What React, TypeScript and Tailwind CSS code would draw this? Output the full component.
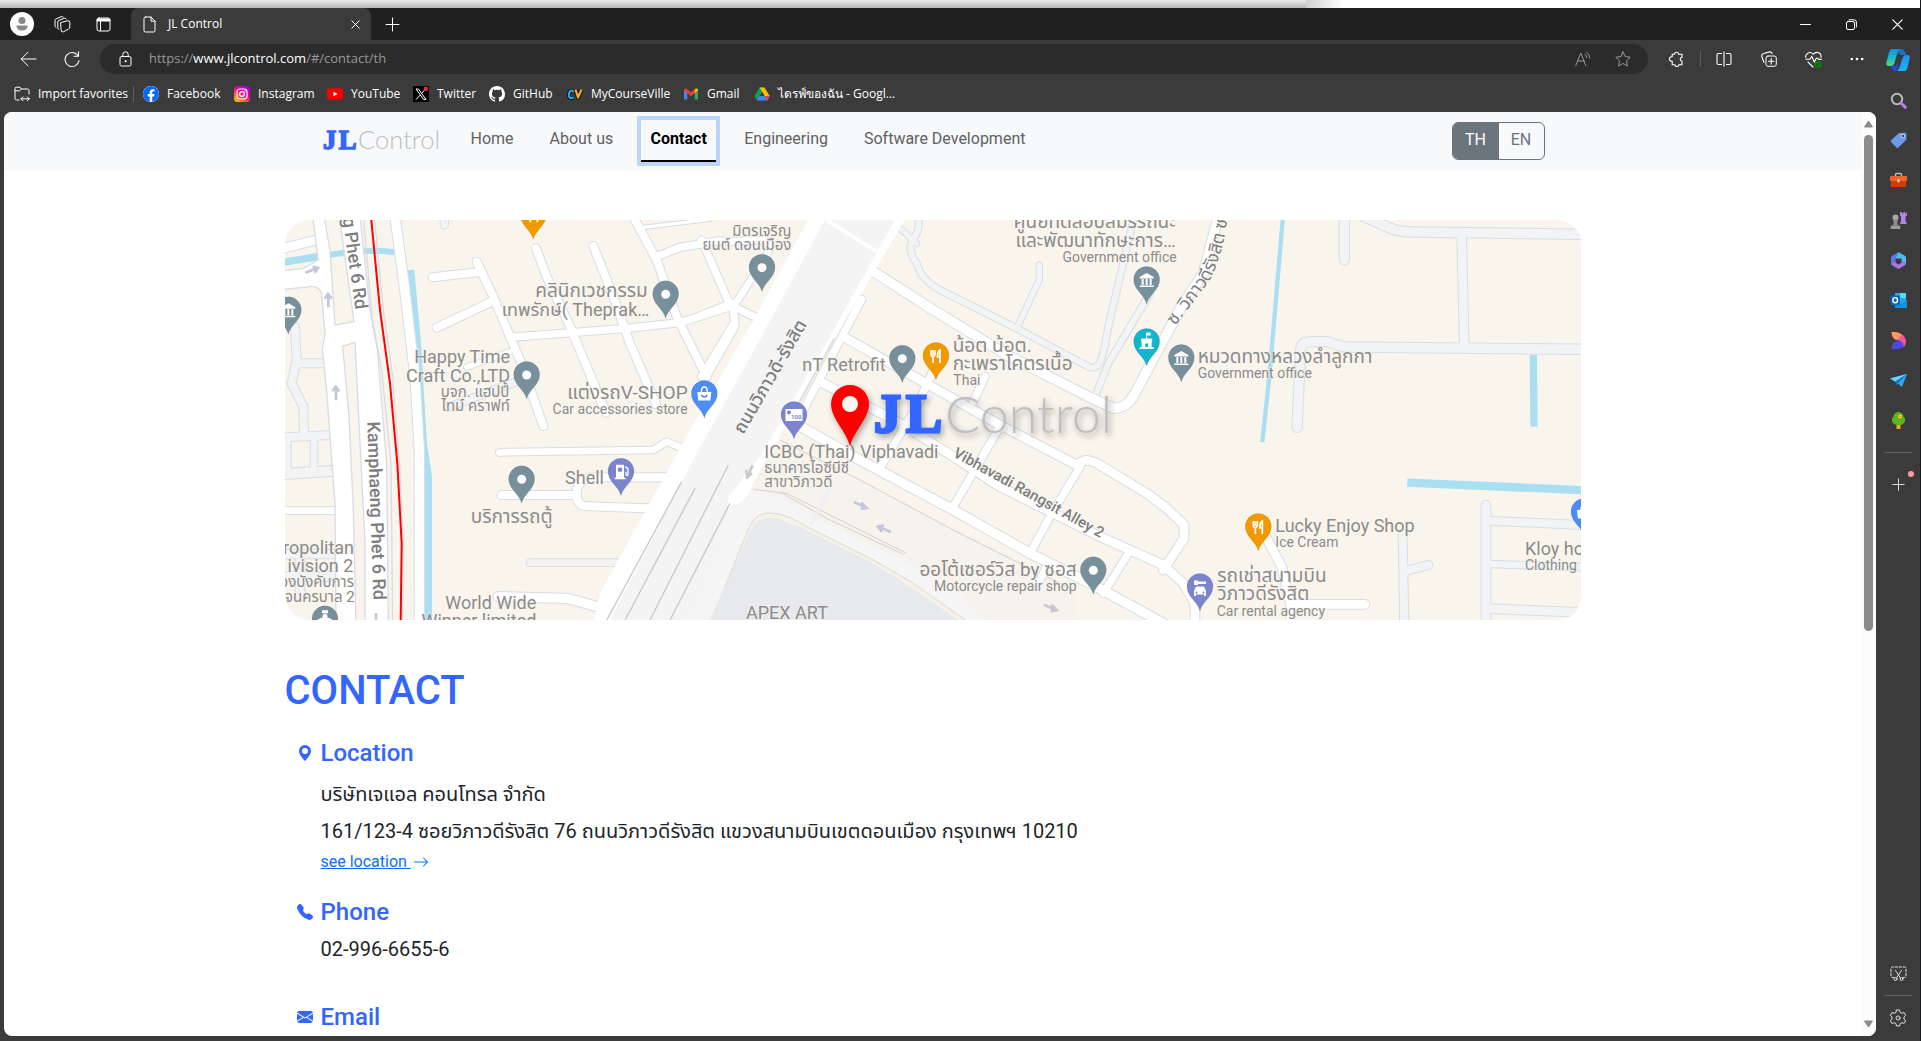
import React from "react";
import {
  BsArrowRight,
  BsEnvelopeFill,
  BsFacebook,
  BsGeoAltFill,
  BsGithub,
  BsTelephoneFill,
} from "react-icons/bs";

const UI = "font-['Open_Sans','Noto_Sans',sans-serif]";
const PAGE = "font-['Roboto','Noto_Sans_Thai',sans-serif]";

type SvgProps = { children: React.ReactNode; size?: string; box?: string };

function Line({ children, size = "size-4", box = "0 0 16 16" }: SvgProps) {
  return (
    <svg
      className={`${size} shrink-0`}
      viewBox={box}
      fill="none"
      stroke="currentColor"
      strokeLinecap="round"
      strokeLinejoin="round"
      aria-hidden="true"
    >
      {children}
    </svg>
  );
}

function IconButton({ label, className, children }: { label: string; className: string; children: React.ReactNode }) {
  return (
    <button type="button" aria-label={label} className={`flex shrink-0 items-center justify-center ${className}`}>
      {children}
    </button>
  );
}

/* ---------- Browser chrome ---------- */

function TabStrip() {
  return (
    <div className="flex h-8 shrink-0 items-stretch bg-[#202020] text-white">
      <IconButton label="Profile" className="w-[43px]">
        <svg className="size-6" viewBox="0 0 24 24" aria-hidden="true">
          <circle cx="12" cy="12" r="12" fill="#fff" />
          <circle cx="12" cy="8.500" r="3.500" fill="#8a8886" />
          <path d="M6.500 13.500h11c.4 3-2.300 5-5.500 5s-5.900-2-5.500-5z" fill="#8a8886" />
        </svg>
      </IconButton>
      <IconButton label="Workspaces" className="w-[38px]">
        <Line size="size-[17px]" box="0 0 17 17">
          <path d="M7 6.500 L13.500 4.800 Q15.800 4.300 15.800 6.300 V11 Q15.800 12.500 14.500 13 L9.500 15.800 Q7 16.500 7 14 Z" />
          <path d="M4.800 13.500 Q3.800 13 3.800 11.500 V6 Q3.800 4.800 5 4.300 L10.500 2.300 Q12 2 12.500 3" />
          <path d="M2 11.500 Q1 11 1 9.500 V4.500 Q1 3.300 2.200 2.800 L7 .8 Q8.500 .5 9.200 1" />
        </Line>
      </IconButton>
      <IconButton label="Tab actions" className="w-[45px]">
        <Line size="size-[15px]" box="0 0 15 15">
          <rect x="1" y="1" width="13" height="13" rx="2" />
          <path d="M4.500 4v9.500" />
          <path d="M2 3h11" strokeWidth="3" />
        </Line>
      </IconButton>
      <div className="ml-[5px] flex w-[240px] items-center rounded-t-lg bg-[#3b3b3b] pl-3">
        <Line size="h-[17px] w-[13px]" box="0 0 13 17">
          <path d="M2.500 1H8l4 4.200V14.500Q12 16 10.500 16h-8Q1 16 1 14.500v-12Q1 1 2.500 1zM8 1v4.200h4" />
        </Line>
        <span className="ml-3 flex-1 text-xs">JL Control</span>
        <IconButton label="Close tab" className="mr-1 size-6">
          <Line size="size-[9px]" box="0 0 9 9">
            <path d="M.8 .8l7.400 7.400M8.200 .8L.8 8.200" />
          </Line>
        </IconButton>
      </div>
      <IconButton label="New tab" className="w-[42px]">
        <Line size="size-[15px]" box="0 0 15 15">
          <path d="M7.500 1v13M1 7.500h13" />
        </Line>
      </IconButton>
      <div className="flex-1" />
      <IconButton label="Minimize" className="w-[46px]">
        <Line size="size-[11px]" box="0 0 11 11">
          <path d="M.5 5.500h10" />
        </Line>
      </IconButton>
      <IconButton label="Restore" className="w-[46px]">
        <Line size="size-[11px]" box="0 0 11 11">
          <rect x=".5" y="2.500" width="8" height="8" rx="1.500" />
          <path d="M3 .8h5Q10.400 .8 10.400 3V8" />
        </Line>
      </IconButton>
      <IconButton label="Close window" className="w-[46px]">
        <Line size="size-[11px]" box="0 0 11 11">
          <path d="M.8 .8l9.400 9.400M10.200 .8L.8 10.200" strokeWidth="1.200" />
        </Line>
      </IconButton>
    </div>
  );
}

function Toolbar() {
  return (
    <div className="flex h-9 shrink-0 items-start pt-1 text-white">
      <IconButton label="Back" className="ml-2 h-[30px] w-10">
        <Line size="h-4 w-[17px]" box="0 0 17 16">
          <path d="M16 8H1.200M8 1.200L1.200 8 8 14.800" />
        </Line>
      </IconButton>
      <IconButton label="Refresh" className="ml-1 h-[30px] w-10">
        <Line size="h-[17px] w-4" box="0 0 16 17">
          <path d="M13.800 4.500A7 7 0 1 0 15 9.500M14.500 .8v4.400H10" strokeWidth="1.100" />
        </Line>
      </IconButton>
      <div className="ml-2 flex h-[30px] flex-1 items-center rounded-full bg-[#2b2b2b] pl-[19px]">
        <Line size="h-4 w-[13px]" box="0 0 13 16">
          <rect x="1" y="5.500" width="11" height="9.500" rx="1.500" />
          <path d="M3.800 5.500V3.500a2.700 2.700 0 0 1 5.400 0v2" />
          <circle cx="6.500" cy="10.200" r=".6" fill="currentColor" />
        </Line>
        <p className="ml-[17px] flex-1 text-[13px] text-[#989898]" aria-label="Address">
          https://<span className="text-white">www.jlcontrol.com</span>/#/contact/th
        </p>
        <IconButton label="Read aloud" className="w-10 text-[#989898]">
          <Line size="size-4">
            <path d="M.8 14.500L5.800 2l5 12.500M2.500 10h6.600M10 3.200q1.600 1.300 1.600 3.300M12 1.500q2.600 2 2.800 5.500" />
          </Line>
        </IconButton>
        <IconButton label="Add to favorites" className="mr-[5px] w-10 text-[#989898]">
          <Line>
            <path d="M8 .8l2.200 4.700 5 .7-3.700 3.600.9 5.200L8 12.500 3.600 15l.9-5.200L.8 6.200l5-.7z" />
          </Line>
        </IconButton>
      </div>
      <div className="ml-3 flex h-[30px] items-center">
        <IconButton label="Extensions" className="w-[34px]">
          <Line>
            <path d="M5.500 3.300a2 2 0 1 1 4 0H13v3.200a1.700 1.700 0 0 0 0 3.500v3.700H9.800a1.800 1.800 0 1 1-3.800 0H3.200v-3.500a2.300 2.300 0 1 1 0-4.500V3.300z" strokeWidth="1.100" />
          </Line>
        </IconButton>
        <span className="ml-[6px] h-4 w-px bg-[#5c5c5c]" />
        <IconButton label="Split screen" className="ml-[5px] w-9">
          <Line>
            <path d="M8 .8v14.400M5.500 2.500H2.500Q1 2.500 1 4v8q0 1.500 1.500 1.500h3M10.500 2.500h3Q15 2.500 15 4v8q0 1.500-1.500 1.500h-3" strokeWidth="1.100" />
          </Line>
        </IconButton>
        <IconButton label="Collections" className="ml-[9px] w-9">
          <Line>
            <rect x="5" y="5" width="10.300" height="10.300" rx="2" />
            <path d="M10.200 7.500v5.500M7.500 10.200H13M3 11.500L.8 5.500Q.3 3.500 2 2.800L8.500 .9q1.800-.4 2.600 1.600" strokeWidth="1.100" />
          </Line>
        </IconButton>
        <IconButton label="Browser essentials" className="ml-2 w-9">
          <svg className="size-[17px]" viewBox="0 0 17 17" fill="none" stroke="#fff" strokeLinecap="round" strokeLinejoin="round" aria-hidden="true">
            <path d="M.8 6.500C0 3 4.500-.5 8.200 3.200 12-.5 16.800 2 16 6.500M.8 8.200h4l2-3 2.500 6 2-4h1.500l1 1.200h2.500M3 11l5 5" strokeWidth="1.100" />
            <circle cx="13" cy="13.300" r="3.600" fill="#107c10" stroke="none" />
            <path d="M11.500 13.500l1 1 2-2.200" stroke="#0a4a0a" />
          </svg>
        </IconButton>
        <IconButton label="Settings and more" className="mr-px ml-2 w-9">
          <svg className="h-1 w-[14px]" viewBox="0 0 14 4" fill="#fff" aria-hidden="true">
            <circle cx="1.800" cy="2" r="1.300" />
            <circle cx="7" cy="2" r="1.300" />
            <circle cx="12.200" cy="2" r="1.300" />
          </svg>
        </IconButton>
      </div>
    </div>
  );
}

const bookmarks = [
  {
    name: "Facebook",
    width: "w-[91px]",
    icon: <BsFacebook className="size-4 rounded-full bg-white text-[#0866ff]" />,
  },
  {
    name: "Instagram",
    width: "w-[93px]",
    icon: (
      <svg className="size-4" viewBox="0 0 16 16" fill="none" aria-hidden="true">
        <defs>
          <linearGradient id="insta" x1="0" y1="1" x2=".7" y2="0">
            <stop offset="0" stopColor="#ffd521" />
            <stop offset=".35" stopColor="#ff5f2a" />
            <stop offset=".65" stopColor="#f80094" />
            <stop offset="1" stopColor="#a100e0" />
          </linearGradient>
        </defs>
        <rect width="16" height="16" rx="3.500" fill="url(#insta)" />
        <rect x="3" y="3" width="10" height="10" rx="3" stroke="#fff" strokeWidth="1.200" />
        <circle cx="8" cy="8" r="2.400" stroke="#fff" strokeWidth="1.200" />
        <circle cx="11" cy="5" r=".7" fill="#fff" />
      </svg>
    ),
  },
  {
    name: "YouTube",
    width: "w-[86px]",
    icon: (
      <svg className="size-4" viewBox="0 0 16 16" aria-hidden="true">
        <rect y="2.300" width="16" height="11.500" rx="3" fill="#f00" />
        <path d="M6.500 5.700v4.600L10.500 8z" fill="#fff" />
      </svg>
    ),
  },
  {
    name: "Twitter",
    width: "w-[76px]",
    icon: (
      <svg className="size-4" viewBox="0 0 16 16" fill="none" aria-hidden="true">
        <path d="M0 0h16v16H0z" fill="#000" />
        <path d="M3 3h2.400l7.600 10.500h-2.400zM3 13.500L7.300 9M8.800 7.200L12.500 3" stroke="#fff" />
        <circle cx="13" cy="2.800" r="2.300" fill="#f4212e" />
      </svg>
    ),
  },
  { name: "GitHub", width: "w-[78px]", icon: <BsGithub className="size-4 text-white" /> },
  {
    name: "MyCourseVille",
    width: "w-[116px]",
    icon: (
      <svg className="size-4" viewBox="0 0 16 16" fill="none" strokeLinejoin="round" aria-hidden="true">
        <path d="M7.200 5.500Q2.500 3 2 8.200T6.500 11.500" stroke="#111" strokeWidth="4" />
        <path d="M7.200 5.500Q2.500 3 2 8.200T6.500 11.500" stroke="#29a8e8" strokeWidth="2.200" />
        <path d="M8.500 3.500l2.500 8 3.500-8" stroke="#111" strokeWidth="4" />
        <path d="M8.500 3.500l2.500 8 3.500-8" stroke="#f9a825" strokeWidth="2.200" />
      </svg>
    ),
  },
  {
    name: "Gmail",
    width: "w-[71px]",
    icon: (
      <svg className="size-4" viewBox="0 0 16 16" aria-hidden="true">
        <path d="M1 3.500v10h3.300V6z" fill="#4285f4" />
        <path d="M15 3.500v10h-3.300V6z" fill="#34a853" />
        <path d="M1 4.500Q1 2 3.200 2.600L8 6.300l4.800-3.700Q15 2 15 4.500L8 10.300z" fill="#ea4335" />
        <path d="M11.700 7.300V3.500l1.100-.9Q15 2 15 4.500z" fill="#fbbc04" />
      </svg>
    ),
  },
  {
    name: "ไดรฟ์ของฉัน - Googl…",
    width: "w-[150px]",
    icon: (
      <svg className="size-4" viewBox="0 0 16 16" aria-hidden="true">
        <path d="M5.500 1.500h5L8 6 3 14.500.5 10z" fill="#0f9d58" />
        <path d="M10.500 1.500L15.700 10h-5L5.500 1.500z" fill="#fbbc04" />
        <path d="M3 14.500L5.300 10h10.400l-2.500 4.500z" fill="#4285f4" />
        <path d="M10.700 10h5l-2.500 4.500z" fill="#ea4335" />
      </svg>
    ),
  },
];

function Favorites() {
  return (
    <nav aria-label="Favorites" className="flex h-9 shrink-0 items-center text-xs whitespace-nowrap text-white">
      <a href="#import" className="ml-[14px] flex items-center gap-2">
        <Line size="size-4">
          <path d="M15 8V4.500Q15 3 13.500 3H7.500L6 1.200H2.200Q1 1.200 1 2.700v10Q1 14 2.500 14H5M1 4.800h4.500L7.500 3M7 12.800h8.300M9 10.800l-2 2 2 2M13.300 10.800l2 2-2 2" />
        </Line>
        <span className="w-[86px]">Import favorites</span>
      </a>
      <span className="mr-[9px] ml-[9px] h-4 w-px bg-[#606060]" />
      {bookmarks.map((b) => (
        <a key={b.name} href={`#${b.name}`} className={`flex shrink-0 items-center gap-2 ${b.width}`}>
          <span className="shrink-0">{b.icon}</span>
          <span>{b.name}</span>
        </a>
      ))}
    </nav>
  );
}

const sideApps: { label: string; art: React.ReactNode }[] = [
  {
    label: "Search",
    art: (
      <>
        <circle cx="7" cy="7" r="5.200" fill="none" stroke="#b8b8b8" strokeWidth="2" />
        <path d="M11.500 11.500l3.800 3.800" stroke="#b780f0" strokeWidth="3" strokeLinecap="round" />
      </>
    ),
  },
  {
    label: "Shopping",
    art: (
      <>
        <path d="M9 1l6-.3q1.300 0 1.300 1.300l.2 5.500-8 8q-1 1-2 0L1.200 10.300q-1-1 0-2z" fill="#6f9ae8" />
        <circle cx="13" cy="4" r="1.800" fill="#3a4a6a" stroke="#dce8ff" strokeWidth=".8" />
      </>
    ),
  },
  {
    label: "Tools",
    art: (
      <>
        <path d="M5.500 4V2.500Q5.500 1.500 6.500 1.500h4q1 0 1 1V4" fill="none" stroke="#bbb" strokeWidth="1.400" />
        <rect y="4" width="17" height="5" rx="1" fill="#f2652a" />
        <path d="M.8 9h15.400v5q0 1-1 1H1.800q-1 0-1-1z" fill="#d83b01" />
        <rect x="7.300" y="7" width="2.400" height="3.500" rx="1" fill="#ccc" />
      </>
    ),
  },
  {
    label: "Games",
    art: (
      <>
        <path d="M10 0h1.800v1.500h1.400V0H15v1.500h1.500V0H17v3.500l-1.500 1V9l1.500 3H10l1-3V4.500L10 3.500z" fill="#b583ea" />
        <circle cx="5.500" cy="5.500" r="3" fill="#a8a8a8" />
        <path d="M3 8.500h5v1.500H7l1 3.500H3L4 10H3z" fill="#8f8f8f" />
        <path d="M.8 13.500h9.400V17H.8z" fill="#9c9c9c" />
      </>
    ),
  },
  {
    label: "Microsoft 365",
    art: (
      <>
        <path d="M8.500 .3L2.500 3.500Q1 4.300 1 6v5.500l4.500-2.700V6.500L11.500 2.500z" fill="#5f74ee" />
        <path d="M8.500 .3l6 3.200Q16 4.300 16 6v5.200L11.500 8.500V6.500L5.500 6.500z" fill="#4fbdf4" />
        <path d="M1 11.500L5.500 8.800v2L8.500 12.500l3-1.700V8.500L16 11.200q0 1.500-1.500 2.300l-5 3q-1 .5-2 0l-5-3Q1 12.700 1 11.500z" fill="#a678e2" />
      </>
    ),
  },
  {
    label: "Outlook",
    art: (
      <>
        <path d="M5 1h11v15H5z" fill="#28a8ea" />
        <path d="M10 1h6v5h-6z" fill="#50d9ff" />
        <path d="M5 9l6 3 6-4v8H5z" fill="#1490df" />
        <rect x=".5" y="3.500" width="9.500" height="9.500" rx="1" fill="#0a64b8" />
        <ellipse cx="5.200" cy="8.200" rx="2.300" ry="2.600" fill="none" stroke="#fff" strokeWidth="1.400" />
      </>
    ),
  },
  {
    label: "Designer",
    art: (
      <>
        <path d="M1.500 0C9-.5 16 3 16 9.500q0 4-2.500 6Q13 9 7 8 2 7 1.500 0z" fill="#f0559a" />
        <path d="M1.500 0C6-.3 10 1 12 3L7.500 8Q2 7 1.500 0z" fill="#ff9a5c" />
        <path d="M1.500 17q0-8 7.500-8.500 4.500 1.500 4.500 6.500-4 3-12 2z" fill="#4a4ae8" />
      </>
    ),
  },
  {
    label: "Drop",
    art: (
      <>
        <path d="M0 6.500L17 2l-5 13-4.500-3.500z" fill="#2fa6ee" />
        <path d="M0 6.500L17 2 5.500 9.500z" fill="#6cd0ff" />
        <path d="M5.500 9.500L17 2 7.500 11.500 6.500 14z" fill="#1374b8" />
      </>
    ),
  },
  {
    label: "Tree",
    art: (
      <>
        <path d="M6.500 12h4v5h-4z" fill="#f5a623" />
        <path d="M8.500 0Q13 .5 13.500 4.500 16 7 14.500 10.500 12.500 13.500 8.500 13 4.500 13.500 2.500 10.500 1 7 3.500 4.500 4 .5 8.500 0z" fill="#5cb518" />
        <circle cx="10" cy="4.500" r="2" fill="#ffc83d" />
        <circle cx="10" cy="4.500" r=".8" fill="#e8791a" />
      </>
    ),
  },
];

function Sidebar() {
  return (
    <aside className="flex w-11 shrink-0 flex-col items-center pt-2 text-[#dedede]">
      <IconButton label="Copilot" className="h-6 w-7">
        <svg className="h-[23px] w-6" viewBox="0 0 24 23" aria-hidden="true">
          <defs>
            <linearGradient id="copA" x1="0" y1="0" x2="0" y2="1">
              <stop offset="0" stopColor="#1b8fd8" />
              <stop offset=".5" stopColor="#16b8d0" />
              <stop offset="1" stopColor="#5ad67a" />
            </linearGradient>
            <linearGradient id="copB" x1="0" y1="0" x2="0" y2="1">
              <stop offset="0" stopColor="#2390f0" />
              <stop offset="1" stopColor="#18b4f8" />
            </linearGradient>
          </defs>
          <path d="M7 0h8q3 0 4 3l1 3h-5l-3-2z" fill="#1c6cc8" />
          <path d="M5 0h9q-2 1-3 5L8.500 14q-1 3-4 3H3q-3.500 0-2.500-4L3 3.500Q4 0 5 0z" fill="url(#copA)" />
          <path d="M19 22h-8q2-1 3-5l2.500-8q1-3 4-3h.5q3.500 0 2.500 4l-2 8.500Q20.500 22 19 22z" fill="url(#copB)" />
          <path d="M5 17h5l3-6-1.500 8Q10.500 22 9 22q-2.500 0-3-2.500z" fill="#1d4fd8" />
        </svg>
      </IconButton>
      <ul className="mt-2 flex flex-col">
        {sideApps.map((a) => (
          <li key={a.label}>
            <IconButton label={a.label} className="h-10 w-11">
              <svg className="size-[17px]" viewBox="0 0 17 17" aria-hidden="true">
                {a.art}
              </svg>
            </IconButton>
          </li>
        ))}
      </ul>
      <span className="mt-3 h-px w-7 bg-[#636363]" />
      <IconButton label="Customize" className="relative mt-[11px] h-10 w-11">
        <Line size="size-[13px]" box="0 0 13 13">
          <path d="M6.500 .8v11.400M.8 6.500h11.400" />
        </Line>
        <span className="absolute top-[7px] right-[6px] size-[6px] rounded-full bg-[#f4a09a]" />
      </IconButton>
      <div className="flex-1" />
      <IconButton label="Screenshot" className="h-10 w-11">
        <Line size="size-[17px]" box="0 0 17 17">
          <path d="M4 12.500H2.500Q1 12.500 1 11V3.500Q1 2 2.500 2h12Q16 2 16 3.500V11q0 1.500-1.500 1.500H13" strokeDasharray="2.500 1.500" />
          <path d="M5.500 5.500l5 7.500M11.500 5.500l-5 7.500" />
          <circle cx="5.500" cy="14" r="1.500" />
          <circle cx="11.500" cy="14" r="1.500" />
        </Line>
      </IconButton>
      <span className="my-[2px] h-px w-7 shrink-0 bg-[#636363]" />
      <IconButton label="Settings" className="mb-[3px] h-10 w-11">
        <Line size="size-[18px]" box="0 0 18 18">
          <path d="M7.500 1h3l.6 2.300 1.700 1 2.300-.7 1.500 2.600L15 8v2l1.600 1.800-1.500 2.600-2.300-.7-1.700 1-.6 2.300h-3l-.6-2.300-1.700-1-2.300.7-1.500-2.600L3 10V8L1.400 6.200l1.500-2.600 2.300.7 1.700-1z" />
          <circle cx="9" cy="9" r="2" />
        </Line>
      </IconButton>
    </aside>
  );
}

/* ---------- Web page ---------- */

function Wordmark() {
  return (
    <>
      <g fill="#3366ff" stroke="#3366ff" strokeWidth="3" fontSize="54" fontWeight="700" fontFamily="Liberation Serif, serif">
        <text x="4" y="40">J</text>
        <text x="36" y="40">L</text>
      </g>
      <text x="75" y="41" fill="#bfbfbf" fontSize="52" fontWeight="300" fontFamily="Lato, sans-serif">
        Control
      </text>
    </>
  );
}

const links = ["Home", "About us", "Contact", "Engineering", "Software Development"];

function SiteNav() {
  return (
    <header className="h-[58px] shrink-0 bg-[#f8f9fb]">
      <div className="mx-auto flex max-w-[1320px] items-start px-12">
        <a href="#home" className="mt-[17px] block">
          <svg className="h-6 w-[121px]" viewBox="0 0 246 48" role="img" aria-label="JL Control">
            <Wordmark />
          </svg>
        </a>
        <nav className="ml-[11px] flex pt-2" aria-label="Main">
          {links.map((l) =>
            l === "Contact" ? (
              <a
                key={l}
                href="#contact"
                aria-current="page"
                className="mx-[10px] h-[42px] w-[75px] border-b-2 border-black pt-[7px] text-center leading-6 font-bold text-black outline-4 outline-[#bcd6fb]"
              >
                {l}
              </a>
            ) : (
              <a key={l} href="#page" className="mx-[10px] px-2 pt-[7px] leading-6 text-[#5f6163]">
                {l}
              </a>
            ),
          )}
        </nav>
        <div className="mt-[10px] ml-auto flex h-[38px] overflow-hidden rounded-md border border-[#6c757d]" role="group" aria-label="Language">
          <button type="button" className="w-[46px] bg-[#6c757d] pb-[2px] text-white">TH</button>
          <button type="button" className="w-[45px] pb-[2px] text-[#6c757d]">EN</button>
        </div>
      </div>
    </header>
  );
}

/* Map geometry is kept in thirds of a pixel. */

const Z6 = 1260;
const Z7 = 2550;
const WHITE = "#ffffff";
const GREY = "#f1f3f4";

type Road = [number, string, number, string];

const minorRoads: Road[] = [
  [0, "M45 350L50 450L35 520L70 590L72 670", 24, GREY],
  [0, "M55 460H135", 24, GREY],
  [0, "M10 682L155 675", 24, GREY],
  [0, "M10 792L160 782", 30, GREY],
  [0, "M22 690V790M102 680V780", 20, GREY],
  [0, "M10 1032H165M10 1100H165M60 1030V1160", 26, GREY],
  [0, "M10 902H165", 20, WHITE],
  [0, "M10 115L108 90", 26, WHITE],
  [0, "M505 592L735 505", 22, GREY],
  [0, "M750 1058H1040", 20, GREY],
  [0, "M493 20V45", 22, GREY],
  [Z6, "M655 30C665 90 600 90 650 160C665 220 720 240 780 270L950 355L1165 470C1200 485 1210 440 1225 350L1300 30", 18, GREY],
  [Z6, "M1018 165V210L950 355", 16, GREY],
  [Z6, "M590 45L650 100", 16, GREY],
  [Z6, "M1350 250L1225 460L1185 560", 18, GREY],
  [Z7, "M643 20V150", 28, GREY],
  [Z7, "M700 20C780 50 780 65 850 66L1370 73", 28, GREY],
  [Z7, "M995 75L1003 415", 26, GREY],
  [Z7, "M501 652L512 420C515 395 530 395 550 395H590C620 400 620 410 650 411L1370 418", 28, GREY],
  [Z7, "M1068 885V1240", 26, GREY],
  [Z7, "M1075 932L1370 946", 24, GREY],
  [Z7, "M1075 1062L1370 1072", 20, GREY],
  [Z7, "M1075 1196L1370 1208", 26, GREY],
  [Z7, "M818 970L823 1240", 24, GREY],
  [Z7, "M830 1082L895 1065", 24, GREY],
];

const mainRoads: Road[] = [
  [0, "M345 20L372 220L405 500L418 720V1240", 28, WHITE],
  [0, "M768 115L800 200L870 350L978 608", 24, WHITE],
  [0, "M940 108L1000 260L1050 400L1128 582", 24, WHITE],
  [0, "M590 155L640 260L690 380L720 450L790 648", 24, WHITE],
  [0, "M458 202L605 185", 24, WHITE],
  [0, "M470 353L635 275", 24, WHITE],
  [0, "M690 382L1040 355L1200 338L1350 290", 22, WHITE],
  [0, "M1060 20L1130 150L1190 320L1280 500", 24, WHITE],
  [0, "M1130 140L1200 112L1320 92", 22, WHITE],
  [0, "M1090 52L1290 28", 10, WHITE],
  [0, "M1280 500L1365 350", 20, WHITE],
  [0, "M560 472L690 425", 16, WHITE],
  [0, "M658 727L1120 720L1160 695L1225 722", 20, WHITE],
  [0, "M665 855H890C890 900 930 885 960 890L1150 896", 24, WHITE],
  [0, "M890 855C890 800 930 802 960 802H1200", 24, WHITE],
  [0, "M655 1160L860 1165L990 1200", 28, WHITE],
  [Z6, "M60 95L190 90C225 100 200 140 185 160L100 290", 20, WHITE],
  [Z6, "M5 90L90 285L195 335M0 318L95 280L105 335L5 500", 22, WHITE],
  [Z6, "M505 175L700 300L930 440L1170 562L1240 595C1290 595 1300 560 1350 465L1400 372L1450 280L1510 190L1555 20", 28, WHITE],
  [Z6, "M430 380L660 510L900 645L1130 765C1160 740 1180 755 1200 765L1340 850L1400 895L1452 945V985L1390 1080", 26, WHITE],
  [Z6, "M360 515L610 645L760 740L900 830L1200 980L1390 1065L1450 1120L1485 1180V1240", 26, WHITE],
  [Z6, "M285 640L480 750L760 900L990 1030L1180 1125L1390 1240", 28, WHITE],
  [Z6, "M700 480L650 590L545 765M855 500L820 575M900 650L760 890M1140 770L1050 920L990 1030M1285 1030L1210 1150M1045 1060L1020 1110", 22, WHITE],
  [Z6, "M485 268L310 600", 22, WHITE],
  [Z7, "M405 975L455 1070L482 1183H705M482 1183V1240", 26, WHITE],
];

function Roads({ list }: { list: Road[] }) {
  return (
    <g fill="none" strokeLinecap="round" strokeLinejoin="round">
      {list.map(([dx, d, w], i) => (
        <path key={`c${i}`} d={d} transform={`translate(${dx} 0)`} stroke="#d9dce3" strokeWidth={w + 6} />
      ))}
      {list.map(([dx, d, w, c], i) => (
        <path key={`f${i}`} d={d} transform={`translate(${dx} 0)`} stroke={c} strokeWidth={w} />
      ))}
    </g>
  );
}

const glyphs: Record<string, React.ReactNode> = {
  dot: <circle cx="0" cy="-24" r="4.500" fill="#fff" />,
  food: (
    <path d="M-5-30v4q0 2.500 2 3v6M-3-30v5M-1-30v4q0 2-2 3M4-17v-13q-2.500 1-2.500 7H4" fill="none" stroke="#fff" strokeWidth="1.700" />
  ),
  gov: <path d="M-7-27L0-31l7 4v1.500H-7zM-5-25h2v6h-2zM-1-25h2v6h-2zM3-25h2v6H3zM-7-18.500H7v1.500H-7z" fill="#fff" />,
  fort: (
    <path
      d="M-.5-33.500H4v3H.5V-27.500H5.500V-24H5V-19H7V-17H-7V-19H-5V-24H-5.500V-27.500H-.5ZM-1.500-19H1.500V-22.500H-1.500Z"
      fill="#fff"
      fillRule="evenodd"
    />
  ),
  bag: (
    <>
      <path d="M-7-26H7l-1 8.500H-6z" fill="#fff" />
      <path d="M-3-26q0-5 3-5t3 5" fill="none" stroke="#fff" strokeWidth="1.500" />
      <path d="M-3-23q3 4 6 0" fill="none" stroke="#4285f4" strokeWidth="1.500" />
    </>
  ),
  fuel: (
    <>
      <path d="M-5-31h8v13h1.500v1.500h-11V-18H-5z" fill="#fff" />
      <path d="M-3-28h4v4h-4z" fill="#7b84cf" />
      <path d="M4-29l3 2v6q-1 2-2 0v-3" fill="none" stroke="#fff" strokeWidth="1.300" />
    </>
  ),
  cash: (
    <>
      <rect x="-8.500" y="-30" width="17" height="12" fill="#fff" />
      <circle cx="-5" cy="-26.500" r="2" fill="#7b84cf" />
      <text x="-3" y="-20" fontSize="6" fontWeight="700" fill="#7b84cf" fontFamily="Roboto, sans-serif">100</text>
    </>
  ),
  car: (
    <>
      <path d="M-6-20l2-4.500h8L6-20v5H4v-1.500h-8V-15h-2z" fill="#fff" />
      <path d="M-6-30.500h4v1h8v2.500h-8v1h-4z" fill="#fff" />
      <circle cx="-3.500" cy="-18.500" r="1" fill="#7b84cf" />
      <circle cx="3.500" cy="-18.500" r="1" fill="#7b84cf" />
    </>
  ),
  badge: (
    <>
      <path d="M-3-33h6v3h-6zM-7-24q7-4 14 0v4H-7z" fill="#fff" />
      <circle cx="0" cy="-27" r="2.500" fill="#fff" />
    </>
  ),
};

const SLATE = "#78909c";
const pins: [number, number, string, string][] = [
  [760, 88, "#f29900", "food"],
  [1157, 325, SLATE, "dot"],
  [740, 567, SLATE, "dot"],
  [1273, 624, "#4c8df6", "bag"],
  [1023, 857, "#7b84cf", "fuel"],
  [725, 880, SLATE, "dot"],
  [25, 373, SLATE, "gov"],
  [135, 1300, SLATE, "badge"],
  [Z6 + 186, 245, SLATE, "dot"],
  [Z6 + 607, 518, SLATE, "dot"],
  [Z6 + 708, 510, "#f29900", "food"],
  [Z6 + 282, 687, "#7b84cf", "cash"],
  [Z6 + 1180, 1153, SLATE, "dot"],
  [Z7 + 50, 282, SLATE, "gov"],
  [Z7 + 50, 468, "#12b5cb", "fort"],
  [Z7 + 154, 516, SLATE, "gov"],
  [Z7 + 385, 1023, "#f29900", "food"],
  [Z7 + 210, 1203, "#7b84cf", "car"],
  [Z7 + 1362, 978, "#4c8df6", "bag"],
];

type Label = [number, number, string, "start" | "end", number];
const labels: Label[] = [
  [1103, 262, "คลินิกเวชกรรม", "end", 19],
  [1108, 318, "เทพรักษ์( Theprak…", "end", 18],
  [690, 460, "Happy Time", "end", 18],
  [690, 515, "Craft Co.,LTD", "end", 18],
  [688, 560, "บจก. แฮปปี้", "end", 15],
  [690, 602, "ไทม์ คราฟท์", "end", 15],
  [1223, 567, "แต่งรถV-SHOP", "end", 19],
  [1223, 612, "Car accessories store", "end", 14],
  [972, 822, "Shell", "end", 18],
  [572, 938, "บริการรถตู้", "start", 19],
  [222, 1032, "ropolitan", "end", 18],
  [220, 1087, "ivision 2", "end", 18],
  [222, 1130, "องบังคับการ", "end", 15],
  [224, 1175, "จนครบาล 2", "end", 15],
  [769, 1197, "World Wide", "end", 18],
  [769, 1250, "Winner limited", "end", 18],
  [Z6 + 274, 78, "มิตรเจริญ", "end", 15],
  [Z6 + 274, 120, "ยนต์ ดอนเมือง", "end", 15],
  [Z6 + 307, 483, "nT Retrofit", "start", 18],
  [Z6 + 758, 427, "น้อต น้อต.", "start", 19],
  [Z6 + 758, 480, "กะเพราโคตรเนื้อ", "start", 19],
  [Z6 + 760, 525, "Thai", "start", 14],
  [Z6 + 193, 743, "ICBC (Thai) Viphavadi", "start", 18],
  [Z6 + 193, 788, "ธนาคารไอซีบีซี", "start", 15],
  [Z6 + 193, 831, "สาขาวิภาวดี", "start", 15],
  [Z6 + 1130, 1097, "ออโต้เซอร์วิส by ซอส", "end", 19],
  [Z6 + 1130, 1143, "Motorcycle repair shop", "end", 14],
  [Z6 + 138, 1228, "APEX ART", "start", 18],
  [Z7 + 137, 55, "ศูนย์ทดสอบสมรรถนะ", "end", 19],
  [Z7 + 137, 110, "และพัฒนาทักษะการ…", "end", 19],
  [Z7 + 140, 157, "Government office", "end", 14],
  [Z7 + 203, 458, "หมวดทางหลวงลำลูกกา", "start", 19],
  [Z7 + 203, 503, "Government office", "start", 14],
  [Z7 + 436, 967, "Lucky Enjoy Shop", "start", 18],
  [Z7 + 436, 1011, "Ice Cream", "start", 14],
  [Z7 + 262, 1117, "รถเช่าสนามบิน", "start", 19],
  [Z7 + 262, 1171, "วิภาวดีรังสิต", "start", 19],
  [Z7 + 260, 1219, "Car rental agency", "start", 14],
  [Z7 + 1185, 1035, "Kloy ho", "start", 18],
  [Z7 + 1185, 1080, "Clothing", "start", 14],
];

const roadNames: [number, number, number, string, number][] = [
  [188, 25, 82, "g Phet 6 Rd", 18],
  [262, 635, 88, "Kamphaeng Phet 6 Rd", 18],
  [Z6 + 757, 738, 29, "Vibhavadi Rangsit Alley 2", 15],
  [Z6 + 130, 675, -60, "ถนนวิภาวดี-รังสิต", 18],
];

const px = (u: number) => (u - 15) / 3;
const py = (v: number) => (v - 30) / 3;

function StreetMap() {
  return (
    <svg
      className="block h-[400px] w-full rounded-[24px]"
      viewBox="0 0 1296 400"
      preserveAspectRatio="xMidYMid slice"
      role="img"
      aria-label="Map of the JL Control office"
      fontFamily="Roboto, 'Noto Sans Thai', sans-serif"
    >
      <rect width="1296" height="400" fill="#f9f5ed" />
      <g transform="translate(-5 -10) scale(0.33333)">
        <g fill="none" stroke="#aadff2">
          <path d="M10 157L112 140" strokeWidth="22" />
          <path d="M150 134L230 124L300 122L345 127" strokeWidth="18" />
          <path d="M392 180L412 400L430 700L445 800V1240" strokeWidth="22" />
          <g transform="translate(2550 0)">
            <path d="M458 30L420 480L397 697" strokeWidth="13" />
            <path d="M1210 435L1212 650" strokeWidth="22" />
            <path d="M832 818L1370 841" strokeWidth="25" />
          </g>
        </g>
        <Roads list={minorRoads} />

        {/* western arterials */}
        <g stroke="#d9dce3" strokeWidth="4">
          <path d="M-10 185L70 175L115 150L98 20H132L150 120L165 345L222 335L178 20H240L270 300L292 420L320 760L325 1240H255V1000L225 398L188 408L207 620L220 900L228 1240H168L165 880L150 680L140 540L127 420L135 370L125 250Q115 228 95 230L-10 240Z" fill="#fff" />
          <path d="M250 20L277 330L305 480L333 760L338 1240M283 20L310 300L338 500L358 760L370 1000L368 1240" fill="none" />
        </g>
        <path d="M273 20L300 300L330 520L352 760L365 1000L362 1240" fill="none" stroke="#ff0000" strokeWidth="6" />

        {/* airport side */}
        <path d="M1380 860C1420 820 1480 840 1560 880L1880 1035L2030 1120L2075 1160L2110 1240H1150Z" fill="#f5f5f5" />
        <path d="M1500 690L1740 810L2020 960L2380 1140L2400 1240H2110L2030 1130L1640 940L1480 850L1410 840Z" fill="#f6f2ec" />
        <path d="M1290 1240L1400 970C1420 920 1440 905 1480 910C1530 915 1560 940 1600 960L1780 1050L1900 1120L2070 1240Z" fill="#f6f2ea" stroke="#dcd8cd" strokeWidth="3" />
        <path d="M1285 1240L1405 975C1430 925 1450 920 1490 926L1560 952L1760 1050L1860 1110L2050 1240Z" fill="#e8e9ed" />
        <path d="M1500 690L1740 810L2020 960L2370 1135M1420 838L1520 850L1660 920L1880 1030M1500 846L1640 925L1870 1033" fill="none" stroke="#d5d0c4" strokeWidth="3" />
        <path d="M1590 945L1650 830" fill="none" stroke="#eff0f1" strokeWidth="12" />

        <Roads list={mainRoads} />

        {/* highway */}
        <path d="M1590 20L1425 320L1230 660L960 1150L940 1240H1180L1355 885Q1400 880 1420 820L1670 375L1880 20Z" fill="#fff" />
        <path d="M1640 20L1450 370L1245 740L985 1240H1230L1340 960L1345 860L1440 740L1655 370L1850 20Z" fill="#f4f4f4" />
        <path d="M1345 765L1105 1240M1245 835L1030 1240M1205 815L975 1240M1350 880L1165 1240" fill="none" stroke="#c9c9c9" strokeWidth="4" />
        <path d="M1663 385L1545 600" stroke="#dcdcdc" strokeWidth="5" />
        <path d="M1640 30L1790 125" stroke="#fff" strokeWidth="12" />

        {/* direction arrows */}
        <g fill="none" stroke="#c3c6dc" strokeWidth="8">
          <path d="M145 292V256M134 266L144 252L155 266M168 570V534M157 544L167 530L178 544M288 1235V1210" />
          <path d="M76 188L112 174M98 170L114 174L104 188" />
          <path d="M1722 876L1756 892M1744 878L1760 894L1742 896M1832 966L1796 950M1812 946L1794 950L1806 966" />
          <path d="M2292 1184L2328 1200M2314 1184L2330 1200L2312 1204M1418 766L1402 800M1398 780L1402 802L1416 790" stroke="#c8c9cd" />
        </g>

        {pins.map(([x, y, color, g], i) => (
          <g key={i} transform={`translate(${x} ${y}) scale(3)`}>
            <path d="M0 0C-2-9-13-14-13-24.500a13 13 0 1 1 26 0C13-14 2-9 0 0z" fill={color} stroke="#00000022" strokeWidth=".6" />
            {glyphs[g]}
          </g>
        ))}
      </g>

      <g fill="#8b8b8b" stroke="#f9f5ed" strokeWidth="2" paintOrder="stroke" strokeLinejoin="round" strokeOpacity=".5">
        {labels.map(([x, y, t, anchor, size]) => (
          <text key={`${t}${x}`} x={px(x)} y={py(y)} textAnchor={anchor} fontSize={size}>
            {t}
          </text>
        ))}
      </g>
      <g fill="#7d7d7d" fontWeight="500">
        {roadNames.map(([x, y, a, t, size]) => (
          <text key={t} fontSize={size} transform={`translate(${px(x)} ${py(y)}) rotate(${a})`}>
            {t}
          </text>
        ))}
        <path id="soi" d="M890 106L925 60Q940 30 943 -10" fill="none" />
        <text fontSize="18" fontWeight="400">
          <textPath href="#soi">ซ. วิภาวดีรังสิต ซ</textPath>
        </text>
      </g>

      <g className="drop-shadow-[2px_3px_3px_rgba(0,0,0,0.35)]">
        <path d="M565 226C561 211 546 198 546 184a19 19 0 1 1 38 0C584 198 569 211 565 226z" fill="#ff0000" />
        <circle cx="565" cy="184" r="8" fill="#faf6f0" />
        <g transform="translate(585 172)" paintOrder="stroke">
          <Wordmark />
        </g>
      </g>
    </svg>
  );
}

function Entry({ icon, title, children }: { icon: React.ReactNode; title: string; children?: React.ReactNode }) {
  return (
    <section className="pl-3">
      <h2 className="flex items-center gap-2 text-2xl leading-[30px] font-medium text-[#3366ff]">
        <span className="text-base">{icon}</span>
        {title}
      </h2>
      <div className="pl-6 text-xl leading-[30px] text-[#212529]">{children}</div>
    </section>
  );
}

function ContactPage() {
  return (
    <main className="mx-auto w-full max-w-[1320px] px-3 pt-[50px]">
      <StreetMap />
      <h1 className="mt-[47px] text-[40px] leading-12 font-medium text-[#3366ff]">CONTACT</h1>
      <div className="mt-[23px] flex flex-col">
        <Entry icon={<BsGeoAltFill />} title="Location">
          <p className="mt-[11px]">บริษัทเจแอล คอนโทรล จำกัด</p>
          <p className="mt-[7px]">161/123-4 ซอยวิภาวดีรังสิต 76 ถนนวิภาวดีรังสิต แขวงสนามบินเขตดอนเมือง กรุงเทพฯ 10210</p>
          <a href="#map" className="mt-1 flex items-center gap-[2px] text-base leading-6 text-[#0d6efd]">
            <span className="whitespace-pre underline">{"see location "}</span>
            <BsArrowRight />
          </a>
        </Entry>
        <div className="mt-[23px]">
          <Entry icon={<BsTelephoneFill />} title="Phone">
            <p className="mt-[7px]">02-996-6655-6</p>
          </Entry>
        </div>
        <div className="mt-[38px]">
          <Entry icon={<BsEnvelopeFill />} title="Email" />
        </div>
      </div>
    </main>
  );
}

function Scrollbar() {
  return (
    <div className="flex w-[15px] shrink-0 flex-col items-center bg-[#fcfcfc] py-2" aria-hidden="true">
      <svg className="h-2 w-[9px]" viewBox="0 0 9 8">
        <path d="M4.500 1L8.500 7h-8z" fill="#8b8b8b" stroke="#8b8b8b" strokeLinejoin="round" />
      </svg>
      <div className="mt-[7px] flex min-h-0 w-full flex-1 justify-center">
        <div className="h-[56%] w-[9px] rounded-full bg-[#8b8b8b]" />
      </div>
      <svg className="h-2 w-[9px]" viewBox="0 0 9 8">
        <path d="M4.500 7L8.500 1h-8z" fill="#8b8b8b" stroke="#8b8b8b" strokeLinejoin="round" />
      </svg>
    </div>
  );
}

export default function App() {
  return (
    <div className={`flex h-screen flex-col overflow-hidden border-r border-[#16191c] bg-[#3b3b3b] ${UI}`}>
      <div className="flex h-2 shrink-0 bg-white">
        <div className="w-[68%] bg-linear-to-b from-[#ececec] to-[#b8b8b8]" />
        <div className="w-[2%] bg-linear-to-r from-[#d0d0d0] to-white" />
      </div>
      <TabStrip />
      <div className="flex min-h-0 flex-1">
        <div className="flex min-w-0 flex-1 flex-col">
          <Toolbar />
          <Favorites />
          <div className="mb-[5px] ml-1 flex min-h-0 flex-1 overflow-hidden rounded-lg bg-white">
            <div className={`flex min-w-0 flex-1 flex-col overflow-hidden ${PAGE}`}>
              <SiteNav />
              <ContactPage />
            </div>
            <Scrollbar />
          </div>
        </div>
        <Sidebar />
      </div>
    </div>
  );
}
